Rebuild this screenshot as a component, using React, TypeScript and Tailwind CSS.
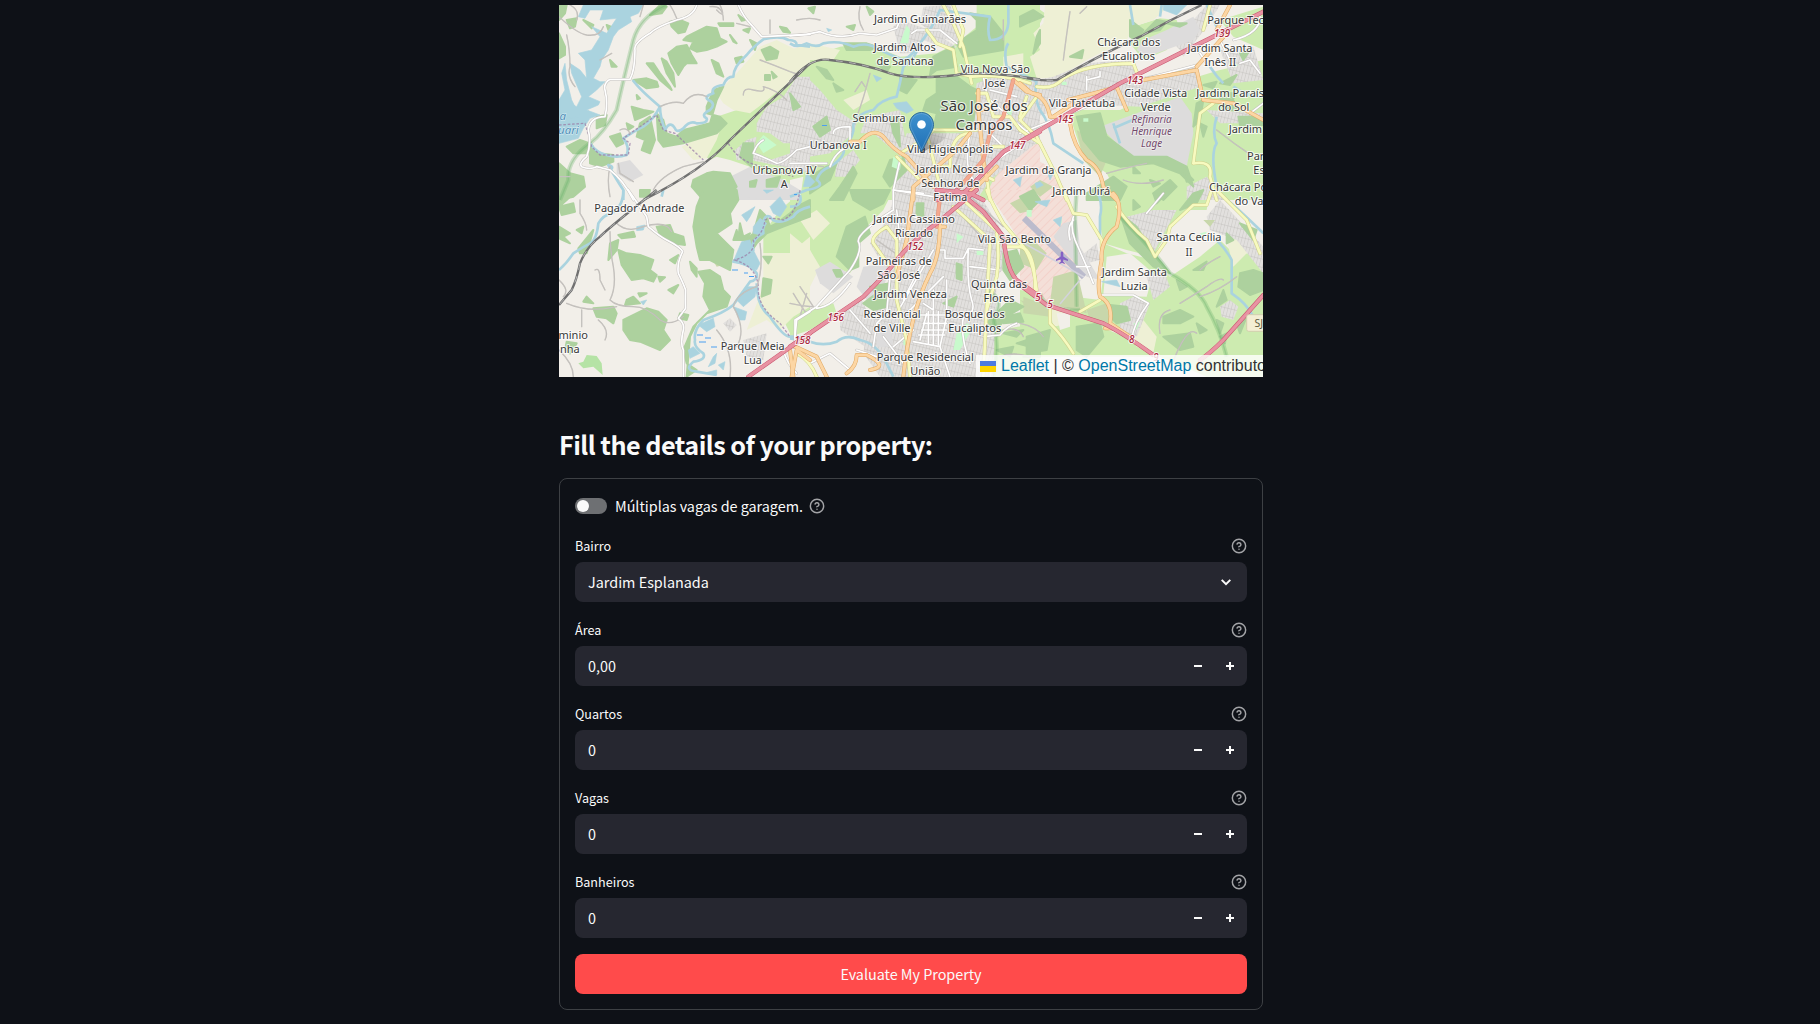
import React from "react";

type Tile = "A" | "B" | "C" | "D" | "E" | "F";
type Shape = [Tile, string];

// Top-left corner of every map tile; tile paths are drawn at three times the map scale.
const ORIGIN: Record<Tile, string> = {
  A: "translate(550 0) scale(.33333)",
  B: "translate(790 0) scale(.33333)",
  C: "translate(1020 0) scale(.33333)",
  D: "translate(550 190) scale(.33333)",
  E: "translate(790 190) scale(.33333)",
  F: "translate(1020 190) scale(.33333)",
};

const grass: Shape[] = [
  ["A", "M500 350L560 330 620 320 700 260 780 200V600H740L690 560 650 540 600 500 540 480 500 470 480 480 430 440 470 400 500 370Z"],
  ["B", "M0 190L60 170 150 140 230 130 330 170 440 160 500 130 560 80 560 15H750V600H0Z"],
  ["C", "M0 15L40 15 75 40 60 70 40 100 60 150 40 210 0 180Z"],
  ["C", "M340 80L420 55 470 60 480 90 440 150 370 180 330 130Z"],
  ["C", "M440 260L500 240 600 210 730 180V600H300L260 520 190 470 160 380 150 330 300 330Z"],
  ["C", "M600 60L730 20V150L640 110Z"],
  ["D", "M640 130L690 60 760 0H780V170L720 190 640 190Z"],
  ["D", "M700 390L780 350V440L730 450Z"],
  ["E", "M0 0H310L280 60 230 110 200 150 205 210 180 250 130 230 80 240 60 180 0 150Z"],
  ["E", "M0 390L80 350 130 340 140 370 60 420 0 450Z"],
  ["E", "M470 230L520 210 520 250 440 320 420 300Z"],
  ["E", "M570 560V440L620 420 750 400V560Z"],
  ["F", "M250 0H570L560 60 500 60 440 130 400 200 320 180 250 160 240 100Z"],
  ["F", "M250 160L320 190 400 210 450 260 540 200 600 150 640 190 730 190V560H560L420 500 300 430 240 410 200 400 90 350 0 330V300L240 330 250 260Z"],
  ["F", "M0 320L90 350 240 410 340 450 430 500H0Z"],
];

const farm: Shape[] = [
  ["A", "M500 280L560 220 630 140 680 120 740 150 780 145V190L700 260 640 310 600 340 550 330 520 310Z"],
  ["A", "M395 440L450 410 520 360 500 420 470 475 430 480Z"],
  ["B", "M0 150L60 130 150 150 130 180 60 180 0 230Z"],
  ["B", "M160 300L230 270 240 300 190 330Z"],
  ["B", "M640 170L700 160 700 230 640 220Z"],
  ["C", "M75 15H450L400 60 340 80 320 120 200 180 110 235 50 235 30 170 60 150 40 100 70 70Z"],
  ["D", "M640 190L720 190 780 140V350L730 380 690 420 650 390 590 420 640 290Z"],
  ["E", "M0 130L60 180 90 230 60 290 0 340Z"],
  ["E", "M30 90L80 60 120 100 70 150Z"],
  ["F", "M620 150L690 135 680 190 640 230Z"],
  ["F", "M330 440L370 390 410 440 400 490 350 470Z"],
  ["F", "M90 360L150 350 150 400 100 410Z"],
];

// Bare ground shown between the northern woods and the railway.
const bare: Shape[] = [
  ["B", "M0 15H330L310 80 260 105 90 110 0 110Z"],
  ["B", "M0 540L40 530 30 600H0Z"],
  ["E", "M0 440L60 420 150 370 230 440 200 560H0Z"],
  ["F", "M110 370L150 370 150 410 120 420Z"],
  ["F", "M260 200L330 190 400 250 380 320 250 315Z"],
];

const urban: Shape[] = [
  ["A", "M620 370L650 320 700 290 740 230 780 230V430L700 430 660 400 620 395Z"],
  ["A", "M555 450L590 420 620 410 610 460 660 480 780 440V520L700 500 600 480 560 480Z"],
  ["B", "M0 270L50 230 90 270 140 330 200 370 190 400 120 460 0 480Z"],
  ["B", "M230 350L330 330 350 440 320 460 250 400 210 400Z"],
  ["B", "M310 80L330 60 420 90 500 140 480 150 400 120 380 160 330 160Z"],
  ["B", "M400 20L480 15 520 130 440 110 390 70Z"],
  ["B", "M350 400H540L560 250 640 220 750 270V420L600 540 560 600H310L320 480Z"],
  ["B", "M140 490L190 450 210 480 170 530 135 530Z"],
  ["C", "M0 250L100 230 200 190 330 180 370 230 530 200 540 260 360 320 140 310 80 340 0 370Z"],
  ["C", "M490 170L560 80 600 15H560L520 60 440 110 480 150Z"],
  ["C", "M600 150L700 140 730 240 640 250Z"],
  ["C", "M560 330L730 340V370H600Z"],
  ["C", "M500 560L560 530 620 600H500Z"],
  ["E", "M320 0L560 0 640 130 660 210 620 260 610 560H270L220 490 230 420 300 260 240 160 290 90Z"],
  ["E", "M150 370L210 320 260 420 240 480 150 420Z"],
  ["E", "M480 40L560 50 640 140 600 180 500 130Z"],
  ["F", "M300 340L340 320 390 340 350 440 300 420Z"],
  ["F", "M320 80L400 60 470 60 400 190 320 110Z"],
  ["F", "M560 80L600 30 730 170V250L690 200 650 150 570 120Z"],
  ["F", "M380 260L430 240 450 290 400 330Z"],
  ["F", "M600 350L630 330 655 350 640 390 605 380Z"],
  ["F", "M180 200L230 160 240 210 200 220Z"],
  ["D", "M580 450L650 430 640 510 590 500ZM520 400L540 385 560 405 540 425Z"],
];

const industrial: Shape[] = [
  ["A", "M200 490L240 480 280 525 240 545 200 520Z"],
  ["A", "M540 530L600 500 700 540 750 570V600H560Z"],
  ["C", "M370 120L440 90 520 50 540 90 520 120 380 170 350 150Z"],
  ["C", "M240 380L350 340 480 290 515 340 520 400 500 500 440 480 340 470 290 430Z"],
  ["D", "M540 0H680L660 30 600 25Z"],
  ["E", "M220 230L300 220 280 300 230 330 200 290Z"],
  ["E", "M75 240L120 215 190 260 130 310 90 280Z"],
  ["E", "M260 400H300L310 470 260 470Z"],
  ["F", "M130 100L170 90 180 170 240 270 200 260 140 190 100 140Z"],
];

const military: Shape[] = [
  ["B", "M750 430L700 440 640 500 610 540 590 580 600 600H750Z"],
  ["C", "M0 520L50 480 90 500 130 560V600H0Z"],
  ["E", "M590 0H750V300L720 200 700 170 650 90Z"],
  ["F", "M0 0H130L160 80 170 360 90 350 0 280Z"],
];

const wood: Shape[] = [
  ["A", "M410 110L440 95 470 80 500 85 510 115 530 125 500 140 470 150 440 155 420 145 430 125 400 120Z"],
  ["A", "M360 65L390 60 415 70 405 95 385 100 365 80ZM355 160L380 140 410 135 425 165 440 190 410 190 400 200 385 225 365 190Z"],
  ["A", "M290 190L310 190 330 220 360 260 365 270 330 240ZM335 175L350 185 370 220 375 260 350 220ZM250 240L290 235 320 245 325 260 290 265Z"],
  ["A", "M485 180L505 190 520 230 500 220ZM540 105L560 130 550 125ZM555 175L575 170 580 185 560 190ZM600 120L620 130 615 150ZM635 150L660 140 685 155 680 175 650 180Z"],
  ["A", "M645 225H660V240H645ZM665 215L680 230 670 235ZM505 70H550V78H510ZM580 90L600 85 595 98ZM690 80L710 85 720 98 700 95ZM565 45L585 60 575 62ZM170 30L200 20 230 15 250 25 230 40 200 40Z"],
  ["A", "M27 15H50L45 40 27 60ZM27 100L45 140 45 165 27 175ZM50 60L80 55 75 80 60 85ZM170 75L195 85 190 97 175 90ZM95 345L115 335 108 360ZM180 180L200 200 185 200ZM100 60L130 75 125 85ZM330 15L350 20 335 40 300 45Z"],
  ["A", "M320 340L340 360 350 400 380 410 400 390 440 380 480 370 500 300 520 260 490 270 470 320 470 340 510 350 530 370 500 400 400 430 340 440 325 420ZM270 370L300 350 315 420 300 460 275 450 285 420 260 410Z"],
  ["A", "M245 320L280 330 310 335 280 350 255 360ZM50 440L90 420 120 430 110 460 70 460ZM120 425L140 460 190 465 190 485 150 500 120 490ZM27 490L60 520 100 530 105 560 70 590 27 600ZM430 540L470 520 490 515 540 520 560 560 530 600H460L425 560ZM180 410L210 400 220 430 200 440ZM570 470L580 430 610 430 605 500Z"],
  ["A", "M600 545L620 540 615 560 600 560ZM650 540L690 530 680 560 650 560ZM230 370L250 380 235 390ZM260 285L270 295 262 298ZM140 350L170 345 165 375 140 385Z"],
  ["B", "M500 130L560 90 640 100 640 150 520 170ZM560 60L540 40 600 50 640 100 560 110ZM740 110L750 90V130L730 160ZM430 170L490 140 500 200 440 210 420 225ZM330 230L380 240 350 280 330 270Z"],
  ["B", "M440 230H500L540 260 560 270 550 370 540 390 430 390 440 340 400 330 410 300 440 280ZM300 480L340 470 350 510 300 560 280 530ZM160 130L230 130 260 140 240 150 170 150ZM80 200L110 210 130 240 110 235ZM0 280L30 320 10 330ZM70 380L110 350 120 390 90 410Z"],
  ["B", "M300 350L325 350 330 440 310 400ZM260 190L300 200 290 215ZM130 250L160 270 140 275ZM150 560L190 500 200 520 160 600H120ZM60 530L110 500 140 490 120 540 60 580ZM55 25L75 20 70 40ZM230 20L250 35 240 45ZM170 80L195 75 190 90Z"],
  ["C", "M0 50L40 30 70 50 20 70 0 80ZM170 350L240 340 260 410 340 470 440 470 500 500 520 560 480 520 400 490 300 500 240 480 190 420ZM330 60L370 90 350 120 330 110ZM150 170L190 150 185 175ZM370 100L410 60 440 65 420 90Z"],
  ["C", "M530 310L550 300 540 360 520 380ZM600 290L640 300 650 330 610 330ZM540 370L560 380 550 410ZM655 350L700 350 730 360V375H660ZM200 580L280 530 320 560 300 600H200ZM440 70H500L480 80ZM600 250L650 225 630 255Z"],
  ["C", "M340 500L360 520 340 520ZM400 580L450 540 470 560 430 600ZM490 510L520 540 500 545ZM620 280L650 280 640 295ZM660 160L690 150 670 180ZM550 255L590 245 580 265ZM390 540L420 550 400 560Z"],
  ["D", "M460 0H560L565 30 540 70 545 100 500 130 530 160 550 180 540 240 480 210 450 210 440 170 430 110 440 50ZM445 245L480 240 510 260 520 300 540 320 530 350 470 370 440 400 420 440 410 560 440 540 410 520 400 480 430 410 480 360 460 320 465 280Z"],
  ["D", "M205 180L230 190 270 195 310 210 300 240 320 255 310 275 280 265 245 270 215 225ZM220 390L290 355 325 365 350 390 340 420 360 450 330 480 270 455 240 450 220 420ZM130 355L190 350 200 370 190 400 170 385 140 380ZM110 320L130 340 100 335Z"],
  ["D", "M27 0H80L50 30 27 50ZM27 50L70 40 75 65 35 75ZM85 175L130 120 110 190 90 190ZM180 160L205 150 200 180 175 210ZM320 110L360 105 370 130 400 140 405 165 370 160 330 135ZM205 135L250 125 255 140 215 145Z"],
  ["D", "M360 210L385 195 375 220ZM420 215L440 235 440 260 425 240ZM325 260L345 262 330 275ZM265 310L290 310 270 320ZM230 330L250 320 270 340 225 345ZM390 370L415 375 410 390 385 385ZM570 100L580 140 600 130 590 150 550 150 560 120 565 145ZM640 265L665 270 660 310 635 320ZM640 200L665 200 655 220ZM27 110L60 130 40 140 60 160 27 145ZM80 120L100 110 95 130ZM270 0L300 0 295 20 270 20Z"],
  ["D", "M630 60L650 80 660 110 680 100 720 70 740 50 780 30V80L700 110 650 130 620 160 600 190 580 160 610 130ZM50 455L80 460 60 490 45 480ZM355 300L385 285 370 310Z"],
  ["E", "M170 110L225 80 240 130 205 160 205 230 180 240 140 200ZM180 0H300L280 40 240 60 190 30ZM240 290L300 280 290 350 250 360 220 340 260 310ZM380 40H400V80H380ZM500 220L515 225 515 270 500 265ZM640 190L680 180 700 230 660 270 640 240ZM590 400L660 330 700 350 650 380 620 420Z"],
  ["E", "M640 430L700 420 680 440ZM680 460L740 440 720 470ZM620 480L670 470 660 500ZM700 500L750 480V500ZM460 340L500 320 490 350ZM130 240L150 240 160 260 140 260ZM640 380L690 370 700 395 640 400Z"],
  ["F", "M170 410L240 400 250 440 200 500 170 480ZM270 345L320 350 330 390 290 400 270 380ZM660 250L700 240 730 250V300L690 315 655 290ZM430 380L480 360 520 380 480 400 430 400ZM430 440L510 430 520 470 480 480ZM300 70L350 110 400 190 450 250 400 230 330 160ZM480 60L520 10 550 0 530 40ZM20 440L90 420 80 480 20 490Z"],
  ["F", "M590 350L610 300 620 330ZM650 400L680 380 660 430ZM590 390L610 400 600 430ZM400 10L430 20 410 40ZM520 240L560 215 550 240ZM600 440L620 430 615 460ZM530 400L560 420 540 430ZM620 130L640 150 620 160ZM340 30L360 50 340 60ZM470 270L500 290 480 300ZM0 20L40 0 60 30 30 60ZM660 100L710 120 700 150Z"],
];

const scrub: Shape[] = [
  ["C", "M170 390L240 430 290 440 260 480 240 530 190 480Z"],
  ["C", "M30 560L60 540 100 560 60 590Z"],
  ["F", "M100 260L170 240 200 370 90 340Z"],
  ["F", "M0 160L40 150 80 190 50 240 0 220ZM10 320L90 350V380L10 370ZM200 360L260 340 270 400 210 390ZM550 90L585 90 570 110Z"],
  ["E", "M690 330L750 350V370L700 340ZM660 40L700 20 730 60 690 70Z"],
  ["D", "M485 205L515 200 540 220 500 230Z"],
];

const park: Shape[] = [
  ["A", "M620 430L640 405 680 435 640 460Z"],
  ["B", "M330 130L350 75 360 90 355 130ZM310 470L335 470 330 510 305 500ZM640 330L670 320 660 360Z"],
  ["C", "M255 310L270 320 260 325ZM470 210H485V220H470ZM640 190L655 195 640 205ZM125 245H140V255H125ZM190 355H205V365H190Z"],
  ["E", "M500 430L530 400 550 410 510 480 490 480ZM340 450H355V465H340ZM500 130L520 140 500 160ZM560 180H580V195H560Z"],
  ["F", "M340 400L360 395 350 420ZM540 130L560 125 550 145ZM20 60H35V80H20ZM110 85H125V100H110Z"],
];

const meadow: Shape[] = [["D", "M85 520L100 515 110 495 140 498 155 520 158 555 130 530 100 535Z"]];

const water: Shape[] = [
  ["A", "M190 15H280L265 40 240 50 245 65 205 90 190 110 175 150 155 180 150 200 130 235 150 245 165 245 140 270 115 290 150 305 145 315 110 330 150 345 120 355 100 385 85 415 27 430V345L70 340 60 310 80 320 95 290 65 220 60 190 90 210 110 235 105 180 85 160 125 150 150 110 125 80 170 100 200 55 150 60 160 30 120 30 105 55 85 50 100 15Z"],
  ["A", "M27 360V300L45 270 35 220 45 190 50 240 65 300 90 350Z"],
  ["B", "M310 310L350 305 370 330 350 340 320 325ZM250 225L275 235 260 245ZM40 560L50 520 75 545 60 560ZM110 85L125 90 115 95ZM670 540L695 530 690 560Z"],
  ["C", "M430 15H500L470 45 430 30ZM45 550L60 545 70 555 50 565ZM80 510L100 520 90 540Z"],
  ["D", "M560 190L575 155 600 150 610 180 630 220 620 240 580 225 550 215ZM610 110L630 85 650 100 630 135 610 130ZM560 330L590 290 620 290 615 320 580 350ZM550 350L590 365 585 390 570 390ZM445 405L490 385 495 410 470 425ZM415 480L430 470 450 490 420 505ZM660 50L690 20 710 50 690 80 670 70ZM575 75L615 50 600 80 590 95ZM260 110L285 105 280 120 260 122ZM272 335L290 330 280 345Z"],
  ["D", "M475 530L490 500 500 490 495 520ZM505 525L525 515 520 540ZM460 550L500 540 500 555ZM640 0H670L650 10Z"],
  ["F", "M45 35L90 30 80 50ZM100 90L125 80 120 110ZM245 275L290 270 300 290 260 280Z"],
];

const rivers: Shape[] = [
  ["A", "M248 240Q270 270 330 320Q310 360 280 380Q250 395 220 415Q240 440 230 465Q200 475 170 465Q140 460 120 430"],
  ["A", "M330 320Q330 350 345 390Q360 360 375 385Q380 400 400 385Q420 360 440 370Q475 370 470 355Q450 345 480 330Q500 310 475 300Q460 290 490 280Q480 260 520 255Q530 230 550 230Q550 200 590 165Q610 140 640 118Q690 105 715 120Q740 120 740 135L780 140"],
  ["A", "M180 510Q195 500 175 495Q200 540 220 570V600"],
  ["B", "M0 130Q20 145 50 130Q80 145 100 130Q150 120 190 140Q230 125 260 145Q300 165 340 180Q370 165 390 130Q430 80 450 30L600 50Q590 90 600 120Q650 120 655 70V15M655 130Q640 150 650 200L740 245"],
  ["B", "M390 130Q380 170 340 200Q330 250 320 290Q270 300 250 330Q200 340 190 375Q195 410 160 440Q170 470 120 500Q90 510 80 540Q110 560 50 570L0 590"],
  ["C", "M330 15L340 75M425 15L420 50M560 15L590 80M570 200Q590 230 610 250M590 350Q575 400 590 430Q570 460 590 560M50 240Q40 290 60 330Q90 370 100 430Q160 470 190 490M280 385L360 350M280 370L300 430M640 260Q680 290 720 290"],
  ["D", "M27 240Q50 220 70 190Q100 170 120 160Q140 150 145 100Q160 75 185 70Q220 50 220 0M340 0L335 20M780 50Q740 60 730 80Q680 110 660 80Q635 70 640 130Q600 150 610 180Q560 200 550 215Q600 220 620 250Q625 270 600 275Q560 330 550 345Q520 370 460 390Q430 420 435 450Q430 470 460 490Q470 510 430 515Q400 540 440 545L500 555"],
  ["D", "M620 280Q620 350 660 380Q700 440 720 440H780"],
  ["E", "M0 445Q30 450 60 455Q100 470 140 455Q170 430 210 450Q260 460 290 520L310 560M0 50Q40 50 30 15"],
  ["F", "M230 0Q250 40 240 80Q240 120 240 150M590 150Q620 180 635 210V310Q680 340 700 380M610 20Q660 60 730 130"],
];

const minor: Shape[] = [
  ["A", "M330 320Q370 300 400 310Q430 270 470 290M580 285Q580 260 610 270Q650 280 640 260Q680 270 710 300M630 180Q660 190 720 215L740 222M50 105Q60 150 60 200Q50 230 75 260M310 570Q330 530 400 500L460 485M180 500Q170 540 180 590M27 50Q80 100 110 105Q150 110 160 80M60 15Q90 30 80 60M500 30Q530 60 510 15M210 390Q230 380 240 400M30 530H60"],
  ["A", "M380 55Q370 30 360 15M150 180L185 160M480 20Q520 15 520 60M560 70L600 80M660 60V100M280 15L270 50M205 490L210 520 250 545"],
  ["B", "M240 220Q220 300 200 350M195 275L215 245 225 260M90 450L200 430M510 460L490 510M10 490L100 500M640 120V60M20 60Q60 50 90 60M210 20Q200 60 220 90"],
  ["C", "M150 35Q140 100 130 180M260 520Q330 500 380 490M590 390Q640 430 700 470M310 540Q360 560 430 540M200 20L180 40"],
  ["D", "M180 125Q180 180 190 230Q200 290 180 330Q200 350 250 350Q290 350 330 390Q360 410 400 380M90 30V70Q110 100 110 120M135 240Q150 230 150 270L165 300M50 340Q120 370 200 350M145 390Q180 420 165 450M200 100Q230 130 280 110Q350 90 365 125M500 420Q550 480 540 560M630 160Q640 240 620 290Q560 310 550 350Q590 420 560 470M27 480Q70 520 70 560M730 310Q760 360 770 370M770 310L750 380M95 360V410M27 270Q60 300 40 320"],
  ["E", "M500 60L600 170M520 0L640 110M330 200L260 150M0 340Q50 350 70 350L30 290M620 430Q680 400 700 440M630 500Q680 480 740 510"],
  ["F", "M480 340Q530 310 560 290Q600 260 610 270M420 430Q410 370 450 360M540 320Q600 300 650 260M600 200Q560 220 540 240M0 400Q50 410 70 440M450 540Q500 400 530 430"],
];

const white: Shape[] = [
  ["A", "M440 15Q430 50 380 60Q320 80 300 100Q250 130 255 150Q255 210 240 238H180Q160 250 165 270Q175 310 165 350Q120 350 115 390Q125 430 110 470Q85 490 95 500Q120 510 140 500L180 510Q220 540 250 600M565 15Q580 50 600 70L635 110L780 103M610 460Q640 470 680 490Q700 490 740 450L780 440M610 460Q620 430 640 420"],
  ["B", "M0 108L50 103 90 95Q150 120 210 100L260 105 320 85 330 60M130 400Q130 380 180 380V420M110 490L0 490M120 500Q140 440 210 430M365 100L380 90H450L500 130M600 270L680 290M600 400L640 440M310 570L400 580M330 480L310 570M540 400Q520 500 550 540M600 300L740 420M560 530L620 480 740 400M580 230L590 280"],
  ["C", "M600 120L640 200M200 230V270M200 240L240 230V215M380 235L530 195M540 160L560 190M640 120Q720 100 720 50M0 400L200 320M660 190L690 180 720 220M690 340L730 310"],
  ["D", "M235 0L270 50 290 80 295 110Q330 140 350 150Q390 170 398 185Q380 220 385 250Q400 280 407 300Q405 330 407 355L385 385Q405 400 400 420Q390 460 400 480V560M780 365L740 390 735 440V470L700 480Q710 520 740 550"],
  ["E", "M310 0V60Q200 130 205 155Q220 180 180 240L80 350 15 390V440M80 355Q130 350 180 280M310 0L430 20M370 80L440 95M330 150L320 60M440 180H465V205H520L535 175 580 180M535 175Q530 280 545 330Q560 370 520 380Q510 440 540 520M540 230L630 240M580 440L630 435Q650 410 680 400M320 370L430 180M350 370L460 260M340 330L400 210M430 300V360L400 340M470 270V360M250 470L260 400 290 370 300 260M370 455L450 470 480 560M410 370L390 450M470 380L450 470M200 480L260 500M60 520L120 490 180 540"],
  ["E", "M370 375H480M400 400H470M395 420H470M430 365V465M445 365V465M415 365V460M385 435H465M310 470L370 420M180 360L240 430M280 440L340 520"],
  ["F", "M160 80Q150 110 165 150L200 230 220 280M150 150Q140 110 160 90M245 315H340L385 340Q340 400 335 450M380 70L430 10M170 230H210"],
];

const yellow: Shape[] = [
  ["B", "M410 90L440 130 490 150 500 220 550 230M460 15L490 70 520 140 545 250M490 15L520 90 510 140M545 230Q640 220 720 250M560 280H590L610 350 660 350 690 390 750 430M690 360L740 290M330 460L400 420 430 390H560M540 400Q480 400 480 500L440 500M320 470L390 540M640 440H610M610 540L590 530 600 600M410 400L450 560"],
  ["C", "M0 360L50 410 110 530 140 600M50 260Q100 270 130 235Q200 190 340 190L355 230M570 15L550 90M580 310L540 340 520 490Q580 480 570 530L590 600M0 350L20 290"],
  ["E", "M490 50L600 150 580 560M620 130Q630 200 620 260L590 360M520 30L650 150M640 170H700Q730 210 740 300M250 160Q240 140 290 110L320 150V330L350 450L360 560M590 0Q600 30 640 100L700 170M20 490Q60 510 80 560M250 160L300 230"],
  ["F", "M130 0L160 70 200 75 245 150V175M290 50Q330 110 380 150L405 200L440 150 450 110 520 45H560L575 0M600 10L680 90 720 190M90 360V400Q130 440 160 490M180 365L240 330M0 170Q50 180 45 320M590 0L620 30"],
];

const orange: Shape[] = [
  ["B", "M180 425H210Q250 380 280 410Q310 450 350 470L430 560M750 285L710 275 670 240M565 270V330L580 480 590 540M540 400L500 450 370 560 370 600M590 330H560M620 500L540 580"],
  ["C", "M0 250L35 280Q80 290 90 350L150 350M145 300L260 270 290 260 320 330M370 240L530 210 550 300 640 310 730 360M530 200L620 100M150 370Q160 440 200 480Q240 500 250 560L290 600M590 90L630 15M100 350L160 310"],
  ["D", "M725 560L740 480 780 510"],
  ["E", "M370 0L350 150 320 260M445 110H465M450 100Q450 200 420 250Q360 370 340 560M15 470L80 500 110 560M170 550Q200 530 200 495H230Q300 530 240 540M0 480L10 560M540 0L480 20"],
  ["F", "M280 10Q310 40 290 110Q240 150 245 210Q230 290 240 320Q280 340 270 400L330 440M255 415H280"],
];

const primary: Shape[] = [
  ["B", "M670 240L640 350 600 400 580 480 510 560"],
  ["E", "M450 20L440 110"],
];

const trunk: Shape[] = [
  ["B", "M750 395L640 455 560 540 520 580 440 600M440 570L540 580 580 600"],
  ["C", "M730 35L560 120 300 250 60 390 0 425"],
  ["D", "M595 560L780 430"],
  ["E", "M0 470L220 320Q290 250 320 210Q370 150 440 100L560 0M500 0L580 65 640 140Q650 240 680 270L750 320"],
  ["F", "M0 285L80 345 250 400Q310 430 400 495M730 315L610 450Q570 490 540 510"],
];

const rail: Shape[] = [
  ["A", "M280 600Q460 510 540 420L780 190"],
  ["B", "M0 245Q60 170 120 180Q220 190 300 220Q370 240 500 225Q560 210 750 238"],
  ["C", "M0 230Q60 245 110 240Q230 170 360 110Q450 60 545 15"],
  ["D", "M320 0Q180 110 150 140Q110 170 90 220Q80 270 65 300L27 345"],
];

const boundary: Shape[] = [
  ["A", "M27 375L105 370 125 440 150 465 200 465 235 465 240 430 220 415 320 345 340 390 375 400 460 480"],
  ["A", "M535 430Q570 490 640 500L730 530"],
  ["D", "M750 0Q740 70 700 90Q660 80 645 90Q640 130 610 150Q620 190 555 210Q620 230 625 290Q620 350 690 400L720 440"],
];

const greenway: Shape[] = [
  ["A", "M350 15Q270 50 250 120Q220 240 200 330Q160 400 120 430Q50 480 55 540L30 600"],
  ["F", "M170 0L165 80 170 350M300 80Q400 180 450 250Q540 300 560 350Q600 420 620 500M60 310Q70 360 180 360"],
  ["E", "M590 300Q650 330 610 380 630 470 610 560"],
];

const Layer = ({ data, ...rest }: { data: Shape[] } & React.SVGProps<SVGPathElement>) => (
  <>
    {data.map(([tile, d], i) => (
      <path key={i} transform={ORIGIN[tile]} d={d} {...rest} />
    ))}
  </>
);

const Road = ({ data, edge, fill, width }: { data: Shape[]; edge: string; fill: string; width: number }) => (
  <g fill="none" strokeLinejoin="round" strokeLinecap="round">
    <Layer data={data} stroke={edge} strokeWidth={width + 3} />
    <Layer data={data} stroke={fill} strokeWidth={width} />
  </g>
);

// [text, centre x, baseline, width]
const places: [string, number, number, number][] = [
  ["Urbanova IV", 784.5, 173.5, 64], ["A", 784.3, 187.5, 7],
  ["Jardim Guimarães", 920, 22.7, 92], ["Jardim Altos", 904.7, 51, 62], ["de Santana", 905, 65, 57],
  ["Vila Nova São", 995.3, 73, 69], ["José", 995, 87, 21],
  ["Serimbura", 879, 121.7, 53], ["Urbanova I", 838.3, 148.7, 57],
  ["Vila Higienópolis", 950.3, 152.7, 86], ["Jardim Nossa", 950, 172.5, 68], ["Senhora de", 950.3, 186.5, 58], ["Fatima", 950.3, 200.5, 34],
  ["Jardim da Granja", 1048.5, 173.5, 86], ["Chácara dos", 1128.7, 46.3, 63], ["Eucaliptos", 1128.5, 60.3, 53],
  ["Jardim Santa", 1220, 52, 65], ["Inês II", 1220.3, 66, 32],
  ["Cidade Vista", 1155.7, 96.7, 63], ["Verde", 1155.7, 110.7, 30], ["Vila Tatetuba", 1082, 106.5, 66],
  ["do Sol", 1233.7, 110.7, 31], ["Jardim Uirá", 1081.3, 194.5, 58],
  ["Pagador Andrade", 639.3, 212, 90], ["Parque Meia", 752.7, 350, 64], ["Lua", 752.7, 364.3, 18],
  ["Jardim Cassiano", 914, 223, 82], ["Ricardo", 914, 237.3, 38], ["Vila São Bento", 1014.4, 243, 73],
  ["Palmeiras de", 898.7, 264.5, 66], ["São José", 898.7, 278.7, 43],
  ["Quinta das", 999, 287.5, 56], ["Flores", 999, 301.5, 31], ["Jardim Veneza", 910.3, 297.7, 73],
  ["Residencial", 892, 317.7, 57], ["de Ville", 892, 331.8, 37],
  ["Bosque dos", 974.7, 317.7, 60], ["Eucaliptos", 974.7, 331.8, 53],
  ["Parque Residencial", 925.3, 360.7, 97], ["União", 925.3, 374.8, 30],
  ["Santa Cecília", 1189, 241, 65], ["II", 1189, 255.5, 7],
  ["Jardim Santa", 1134.3, 276, 65], ["Luzia", 1134.3, 290, 27],
];

// Labels that run over the edge of the map: [text, left x, baseline]
const cutPlaces: [string, number, number][] = [
  ["Parque Tecnológico", 1207.3, 24], ["Jardim Paraíso", 1196.3, 96.7], ["Jardim", 1228.7, 133], ["Parque", 1247, 160],
  ["Esp", 1253.3, 174], ["Chácara Pousada", 1209, 190.500], ["do Vale", 1234.7, 204.7], ["minio", 558.5, 339], ["nha", 560, 353],
];

const exits: [string, number, number][] = [
  ["139", 1222, 37], ["143", 1135, 84.3], ["145", 1065.3, 123], ["147", 1017.3, 149], ["152", 915.3, 250],
  ["156", 835.7, 321], ["158", 802.3, 344], ["5", 1038, 301], ["5", 1050.3, 308], ["8", 1131.7, 343.3], ["9", 1156, 361],
];

const MapView = () => (
  <div className="relative h-[372px] w-full shrink-0 overflow-hidden bg-[#f2efe9]">
    <svg viewBox="559 5 704 372" width="704" height="372" className="block" fontFamily='"Noto Sans", sans-serif'>
      <defs>
        <pattern id="streets" width="10" height="24" patternUnits="userSpaceOnUse" patternTransform="rotate(14)">
          <rect width="10" height="24" fill="#e2e0de" />
          <path d="M0 0H10M0 0V24" stroke="#bfbdbb" strokeWidth="2.4" />
        </pattern>
        <pattern id="hatch" width="18" height="18" patternUnits="userSpaceOnUse" patternTransform="rotate(45)">
          <rect width="18" height="18" fill="#f4dfd8" />
          <path d="M0 0V18" stroke="#efc0b8" strokeWidth="2.500" />
        </pattern>
      </defs>
      <Layer data={grass} fill="#cdebb0" />
      <Layer data={farm} fill="#eef0d5" />
      <Layer data={bare} fill="#f2efe9" />
      <Layer data={military} fill="url(#hatch)" />
      <Layer data={urban} fill="url(#streets)" />
      <Layer data={industrial} fill="#dddcdc" />
      <Layer data={scrub} fill="#c8d7ab" />
      <Layer data={wood} fill="#add19e" stroke="#add19e" strokeWidth="6" strokeLinejoin="round" />
      <Layer data={meadow} fill="#b5e3a5" />
      <Layer data={park} fill="#c8facc" />
      <Layer data={water} fill="#aad3df" stroke="#aad3df" strokeWidth="2" strokeLinejoin="round" />
      <Layer data={greenway} fill="none" stroke="#6db36d" strokeOpacity=".3" strokeWidth="13" />
      <Layer data={greenway} fill="none" stroke="#6db36d" strokeOpacity=".35" strokeWidth="4" />
      <Layer data={rivers} fill="none" stroke="#aad3df" strokeWidth="8" strokeLinejoin="round" />
      <path d="M697 335H703M699 342H706M705 338H711M711 347H717M732 270H738M744 273H748M749 276.500H754M822 125.500H827M794 194.500H797" stroke="#4a9ff0" strokeWidth="1" />
      <path d="M1024 218L1084 277" stroke="#bbbbcc" strokeWidth="6" />
      <path d="M1020 241L1084 277M1060 304L1080 280" stroke="#d3d3dc" strokeWidth="1.500" fill="none" />
      <Layer data={boundary} fill="none" stroke="#9b7fa8" strokeOpacity=".75" strokeWidth="4" strokeDasharray="8 5" />
      <Road data={minor} edge="#bdbab6" fill="#d8d5d1" width={1} />
      <Road data={white} edge="#c4c1be" fill="#ffffff" width={5} />
      <Road data={yellow} edge="#cfd08c" fill="#f7fabf" width={8} />
      <Road data={orange} edge="#dfa762" fill="#fcd6a4" width={9} />
      <Road data={primary} edge="#e0937d" fill="#f4a98f" width={9} />
      <Road data={trunk} edge="#c9566f" fill="#e892a2" width={10} />
      <Layer data={rail} fill="none" stroke="#707070" strokeWidth="7" />
      <Layer data={rail} fill="none" stroke="#d6d6d6" strokeWidth="2" strokeDasharray="20 20" />

      <path d="M1062 251.500c.9 0 1.300.8 1.300 1.800v3.200l4.700 3v1.400l-4.700-1.500v2.300l1.500 1.200v1l-2.800-.8-2.800.8v-1l1.500-1.200v-2.300l-4.700 1.500v-1.400l4.700-3v-3.200c0-1 .4-1.800 1.300-1.800Z" fill="#8461c4" />

      <rect x="1246.700" y="314.700" width="30" height="16.600" rx="2" fill="#f3eed4" stroke="#d3cfae" />
      <text x="1254.500" y="327.300" fontSize="10.500" fill="#5e5b40">SJC</text>
      <g fontSize="11.500" fontStyle="italic" fill="#4f8fb8" stroke="#dbeef4" strokeWidth="1" paintOrder="stroke">
        <text x="559.500" y="120">a</text>
        <text x="558" y="133.500">uari</text>
      </g>

      <g fill="#383838" stroke="#ffffff" strokeOpacity=".75" strokeWidth="2.200" strokeLinejoin="round" paintOrder="stroke" fontSize="11">
        {places.map(([t, x, y, w], i) => (
          <text key={i} x={x - w / 2} y={y} textLength={w} lengthAdjust="spacingAndGlyphs">{t}</text>
        ))}
        {cutPlaces.map(([t, x, y], i) => (
          <text key={i} x={x} y={y}>{t}</text>
        ))}
        <g fontSize="15">
          <text x="940.500" y="111" textLength="87" lengthAdjust="spacingAndGlyphs">São José dos</text>
          <text x="955.500" y="130.300" textLength="57" lengthAdjust="spacingAndGlyphs">Campos</text>
        </g>
      </g>
      <g fill="#734a6c" stroke="#eee" strokeWidth="1.500" paintOrder="stroke" fontSize="10" fontStyle="italic" textAnchor="middle">
        <text x="1151.700" y="123">Refinaria</text>
        <text x="1151.700" y="135">Henrique</text>
        <text x="1151.700" y="147">Lage</text>
      </g>
      <g fill="#a8263c" stroke="#fff" strokeOpacity=".8" strokeWidth="2" paintOrder="stroke" fontSize="9.800" fontWeight="500" fontStyle="italic" textAnchor="middle">
        {exits.map(([t, x, y], i) => (
          <text key={i} x={x} y={y}>{t}</text>
        ))}
      </g>
    </svg>

    {/* Location marker with its shadow */}
    <svg viewBox="0 0 41 41" width="41" height="41" className="absolute left-[350px] top-[107px]">
      <defs>
        <linearGradient id="pinShadow" x1="0" y1="1" x2="1" y2="0">
          <stop offset="0" stopColor="#000" stopOpacity=".4" />
          <stop offset="1" stopColor="#000" stopOpacity="0" />
        </linearGradient>
      </defs>
      <path d="M12 41L18 26Q24 14 34 17Q42 22 32 30Z" fill="url(#pinShadow)" />
    </svg>
    <svg viewBox="0 0 25 41" width="25" height="41" className="absolute left-[350px] top-[107px]">
      <defs>
        <linearGradient id="pinBody" x1="0" y1="0" x2="0" y2="1">
          <stop offset="0" stopColor="#3f92cf" />
          <stop offset="1" stopColor="#1f6fb5" />
        </linearGradient>
      </defs>
      <path d="M12.500.5C5.800.5.500 5.900.500 12.600c0 2.600.7 4.800 1.900 6.900L12.500 40l10.100-20.500c1.200-2.100 1.900-4.300 1.900-6.900C24.500 5.900 19.200.5 12.500.5Z" fill="url(#pinBody)" stroke="#2e6c97" strokeWidth="1" />
      <path d="M12.500 1.600c-6 0-10.900 4.900-10.900 11 0 2.400.7 4.500 1.800 6.400L12.500 37.500 21.600 19c1.100-1.900 1.800-4 1.800-6.400 0-6.100-4.900-11-10.900-11Z" fill="none" stroke="#fff" strokeOpacity=".18" />
      <circle cx="12.500" cy="12.500" r="4.300" fill="#fff" />
    </svg>

    <div className="absolute bottom-0 left-[417px] flex h-[22px] w-[400px] items-center whitespace-nowrap bg-white/80 pl-1 font-['Liberation_Sans',sans-serif] text-[16px] leading-[22px] text-[#333]">
      <span className="mr-[5px] flex h-[11px] w-4 flex-col">
        <span className="grow bg-[#4c7be1]" />
        <span className="grow bg-[#ffd500]" />
      </span>
      <span className="whitespace-pre">
        <span className="text-[#0078a8]">Leaflet</span> | © <span className="text-[#0078a8]">OpenStreetMap</span> contributors
      </span>
    </div>
  </div>
);

const Help = () => (
  <svg viewBox="0 0 24 24" className="size-4 shrink-0" fill="none" stroke="#a3a4a7" strokeWidth="2.200" strokeLinecap="round" strokeLinejoin="round">
    <circle cx="12" cy="12" r="10" />
    <path d="M9.090 9a3 3 0 0 1 5.830 1c0 2-3 3-3 3" />
    <path d="M12 17h.01" />
  </svg>
);

const Field = ({ label, children }: { label: string; children: React.ReactNode }) => (
  <div className="flex flex-col gap-1">
    <div className="flex h-6 items-center justify-between text-[12.6px] leading-6">
      <span>{label}</span>
      <Help />
    </div>
    <div className="flex h-10 items-center justify-between rounded-lg bg-[#262730] pl-[13px] text-[14.4px] leading-10">
      {children}
    </div>
  </div>
);

const NumberField = ({ label, value }: { label: string; value: string }) => (
  <Field label={label}>
    <span>{value}</span>
    <span className="flex">
      <button className="flex h-10 w-8 items-center justify-center" aria-label="Decrease">
        <svg viewBox="0 0 8 8" className="size-2"><path d="M0 3h8v2H0Z" fill="#fafafa" /></svg>
      </button>
      <button className="mr-px flex h-10 w-8 items-center justify-center" aria-label="Increase">
        <svg viewBox="0 0 8 8" className="size-2"><path d="M3 0h2v3h3v2H5v3H3V5H0V3h3Z" fill="#fafafa" /></svg>
      </button>
    </span>
  </Field>
);

export default function App() {
  return (
    <div className="flex h-screen justify-center overflow-hidden bg-[#0e1117] pt-[5px] font-['Noto_Sans_CJK_SC',sans-serif] text-[#fafafa]">
      <main className="ml-[2px] flex w-[704px] flex-col">
        <MapView />
        <h3 className="mb-[14px] mt-[47px] h-10 shrink-0 text-[25.2px] font-semibold leading-10 tracking-[-0.53px]">Fill the details of your property:</h3>
        <form className="flex shrink-0 flex-col gap-4 rounded-lg border border-[#3d4044] p-[15px]">
          <div className="flex h-6 items-center text-[14.4px] leading-6">
            <span className="mr-2 flex h-4 w-8 items-center rounded-full bg-[#6e7073] pl-[2px]">
              <span className="size-3 rounded-full bg-[#fafafa]" />
            </span>
            <span className="tracking-[-0.03px]">Múltiplas vagas de garagem.</span>
            <span className="ml-[6px]"><Help /></span>
          </div>
          <Field label="Bairro">
            <span>Jardim Esplanada</span>
            <svg viewBox="0 0 10 7" className="mr-4 h-[7px] w-[10px]" fill="none" stroke="#fafafa" strokeWidth="2">
              <path d="M.7.9L5 5.200 9.300.9" />
            </svg>
          </Field>
          <NumberField label="Área" value="0,00" />
          <NumberField label="Quartos" value="0" />
          <NumberField label="Vagas" value="0" />
          <NumberField label="Banheiros" value="0" />
          <button type="button" className="h-10 rounded-lg bg-[#ff4b4b] pb-px text-[14.4px] leading-[38px] tracking-[-0.03px]">Evaluate My Property</button>
        </form>
      </main>
    </div>
  );
}
